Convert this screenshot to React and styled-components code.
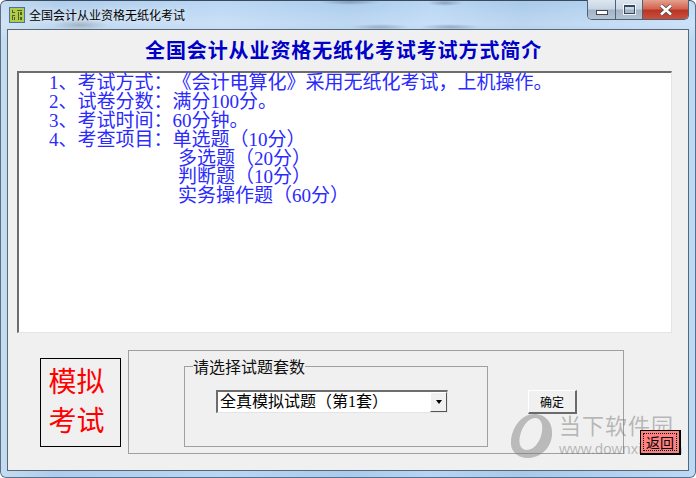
import React from "react";
import styled, { createGlobalStyle } from "styled-components";

const CJK = `"Noto Sans CJK SC", "Liberation Sans", sans-serif`;
const BODY = `"Liberation Serif", "Noto Sans CJK SC", serif`;

const Global = createGlobalStyle`
  html, body {
    margin: 0;
    padding: 0;
    background: #fff;
    overflow: hidden;
    text-spacing-trim: space-all;
  }
`;

const Window = styled.div`
  position: relative;
  width: 696px;
  height: 478px;
  box-sizing: border-box;
  padding: 0 7px 7px;
  display: flex;
  flex-direction: column;
  border-radius: 6px;
  box-shadow: inset 0 1px 0 #3a4a5c, inset 1px 0 0 #5b7088, inset -1px 0 0 #5b7088, inset 0 -1px 0 #5b7088;
  background:
    radial-gradient(ellipse 28px 5px at 80px 25px, rgba(120, 130, 130, 0.45), transparent),
    radial-gradient(ellipse 30px 3px at 350px 2px, rgba(90, 110, 135, 0.5), transparent),
    radial-gradient(ellipse 18px 3px at 445px 3px, rgba(90, 110, 135, 0.5), transparent),
    radial-gradient(ellipse 30px 3px at 380px 27px, rgba(90, 110, 135, 0.4), transparent),
    radial-gradient(ellipse 30px 3px at 450px 27px, rgba(90, 110, 135, 0.45), transparent),
    linear-gradient(180deg, transparent 0, rgba(255, 255, 255, 0.25) 24px, transparent 40px),
    linear-gradient(90deg, #c5dcf0 0, #aecdec 8%, #b9d6f4 32%, #a9cbed 50%, #b6d5f4 62%, #a8c9ea 75%, #bcd9f6 100%);
`;

const TitleBar = styled.div`
  height: 29px;
  display: flex;
  align-items: flex-start;
  flex: 0 0 auto;
`;

const AppIcon = styled.svg`
  width: 16px;
  height: 16px;
  margin: 7px 4px 0 2px;
  flex: 0 0 auto;
`;

const Title = styled.div`
  font: 12px/18px ${CJK};
  color: #000;
  margin-top: 6px;
  white-space: nowrap;
  text-shadow: 0 0 6px rgba(255, 255, 255, 0.9);
`;

const Controls = styled.div`
  margin-left: auto;
  display: flex;
  height: 20px;
  box-sizing: border-box;
  border: 1px solid #4f6175;
  border-top: none;
  border-radius: 0 0 5px 5px;
  overflow: hidden;
`;

const CaptionButton = styled.div`
  width: ${(p) => p.$width}px;
  display: flex;
  align-items: center;
  justify-content: center;
  box-sizing: border-box;
  border-left: ${(p) => (p.$first ? "none" : "1px solid #4f6175")};
  background: ${(p) =>
    p.$close
      ? "linear-gradient(180deg, #e4a190 0, #d4654f 45%, #bb3526 55%, #c8503c 100%)"
      : "linear-gradient(180deg, #dce6f0 0, #c8d6e4 45%, #a3b4c6 55%, #b4c3d3 100%)"};
`;

const MinGlyph = styled.div`
  width: 10px;
  height: 3px;
  margin-top: 6px;
  background: #fff;
  border: 1px solid #445;
`;

const MaxGlyph = styled.div`
  width: 9px;
  height: 6px;
  border: 1px solid #39475a;
  outline: 1px solid rgba(255, 255, 255, 0.8);
  border-top-width: 2px;
`;

const Client = styled.div`
  flex: 1 1 auto;
  min-height: 0;
  box-sizing: border-box;
  background: #f0f0f0;
  border: 1px solid #5a6776;
  display: flex;
  flex-direction: column;
`;

const Heading = styled.div`
  height: 41px;
  flex: 0 0 auto;
  box-sizing: border-box;
  padding: 6px 0 0 137px;
  font: bold 20px/28px ${CJK};
  letter-spacing: 0.9px;
  color: #0000c8;
  white-space: nowrap;
`;

const TextBox = styled.div`
  margin-left: 9px;
  width: 655px;
  height: 262px;
  flex: 0 0 auto;
  box-sizing: border-box;
  background: #fff;
  border-style: solid;
  border-width: 2px 1px 1px 2px;
  border-color: #6d6d6d #e4e4e4 #e4e4e4 #6d6d6d;
`;

const Line = styled.div`
  height: 18.9px;
  line-height: 19px;
  font-family: ${BODY};
  font-size: 19px;
  color: #2a2aff;
  white-space: pre;
  padding-left: ${(p) => p.$indent}px;
`;

const Bottom = styled.div`
  display: flex;
  align-items: flex-start;
  padding: 17px 0 0 32px;
`;

const ModeBox = styled.div`
  width: 81px;
  height: 89px;
  margin-top: 8px;
  box-sizing: border-box;
  border: 1px solid #000;
  color: #f00;
  font: 28px/39px ${CJK};
  text-align: center;
  padding: 2px 8px 0 0;
  flex: 0 0 auto;
`;

const OuterGroup = styled.div`
  margin-left: 7px;
  width: 496px;
  height: 104px;
  box-sizing: border-box;
  border: 1px solid #a0a0a0;
  display: flex;
  align-items: flex-start;
  padding: 6px 0 0 55px;
  flex: 0 0 auto;
`;

const Fieldset = styled.fieldset`
  width: 304px;
  height: 90px;
  box-sizing: border-box;
  margin: 0;
  padding: 15px 0 0;
  border: 1px solid #a0a0a0;
  flex: 0 0 auto;
`;

const Legend = styled.legend`
  font: 16px/18px ${CJK};
  color: #111;
  padding: 0;
  margin-left: 8px;
`;

const Combo = styled.div`
  width: 232px;
  height: 23px;
  margin-left: 31px;
  box-sizing: border-box;
  background: #fff;
  border-style: solid;
  border-width: 2px 1px 1px 2px;
  border-color: #6d6d6d #e4e4e4 #e4e4e4 #6d6d6d;
  display: flex;
  align-items: center;
  font: 16px/20px ${BODY};
  color: #000;
  padding-left: 2px;
`;

const ComboArrow = styled.div`
  margin-left: auto;
  width: 17px;
  height: 20px;
  box-sizing: border-box;
  background: #f0f0f0;
  border-style: solid;
  border-width: 1px;
  border-color: #fff #555 #555 #fff;
  display: flex;
  align-items: center;
  justify-content: center;
  &::after {
    content: "";
    border-style: solid;
    border-width: 4px 3.5px 0;
    border-color: #000 transparent transparent;
  }
`;

const RaisedButton = styled.div`
  margin: 33px 0 0 40px;
  width: 49px;
  height: 24px;
  box-sizing: border-box;
  border-style: solid;
  border-width: 1px 2px 2px 1px;
  border-color: #fff #6a6a6a #6a6a6a #fff;
  background: #f0f0f0;
  font: 12px/21px ${CJK};
  color: #000;
  text-align: center;
  flex: 0 0 auto;
  position: relative;
  z-index: 2;
`;

const BackButton = styled.div`
  margin: 80px 0 0 16px;
  width: 41px;
  height: 25px;
  box-sizing: border-box;
  border-style: solid;
  border-width: 1px 2px 2px 1px;
  border-color: #000;
  background: #ff8080;
  padding: 2px;
  position: relative;
  z-index: 2;
  flex: 0 0 auto;
`;

const BackFocus = styled.div`
  height: 100%;
  box-sizing: border-box;
  border: 1px dotted #000;
  font: 14px/17px ${CJK};
  color: #000;
  text-align: center;
`;

const Watermark = styled.div`
  position: absolute;
  left: 510px;
  top: 412px;
  display: flex;
  align-items: flex-start;
  pointer-events: none;
  color: rgba(110, 110, 110, 0.45);
  z-index: 1;
`;

const WatermarkLogo = styled.svg`
  width: 44px;
  height: 46px;
  flex: 0 0 auto;
  margin-top: 1px;
`;

const WatermarkText = styled.div`
  margin-left: 5px;
  display: flex;
  flex-direction: column;
`;

const WatermarkName = styled.div`
  font: 22px/24px ${CJK};
  letter-spacing: 1px;
  white-space: nowrap;
`;

const WatermarkUrl = styled.div`
  font: 15px/18px "Liberation Sans", sans-serif;
  margin-top: 4px;
  white-space: nowrap;
`;

const lines = [
  { indent: 30, text: "1、考试方式：《会计电算化》采用无纸化考试，上机操作。" },
  { indent: 30, text: "2、试卷分数：满分100分。" },
  { indent: 30, text: "3、考试时间：60分钟。" },
  { indent: 30, text: "4、考查项目：单选题（10分）" },
  { indent: 159, text: "多选题（20分）" },
  { indent: 159, text: "判断题（10分）" },
  { indent: 159, text: "实务操作题（60分）" },
];

export default function App() {
  return (
    <>
      <Global />
      <Window>
        <TitleBar>
          <AppIcon viewBox="0 0 16 16">
            <rect x="0.5" y="0.5" width="15" height="15" fill="#b3c84e" stroke="#4a7396" />
            <path d="M3 3h1v2h2v1H3zM3 8h3v1H4v4H3zM5 10h1v3H5zM8 3h5v1H8zM9 5h1v8H9zM11 5h2v3h-2zM11 10h2v3h-2z" fill="#46641f" />
          </AppIcon>
          <Title>全国会计从业资格无纸化考试</Title>
          <Controls>
            <CaptionButton $width={27} $first>
              <MinGlyph />
            </CaptionButton>
            <CaptionButton $width={27}>
              <MaxGlyph />
            </CaptionButton>
            <CaptionButton $width={46} $close>
              <svg width="14" height="12" viewBox="0 0 14 12">
                <path d="M2 1.5 L12 10.5 M12 1.5 L2 10.5" stroke="#4a4a4a" strokeWidth="4" />
                <path d="M2 1.5 L12 10.5 M12 1.5 L2 10.5" stroke="#fff" strokeWidth="2.6" />
              </svg>
            </CaptionButton>
          </Controls>
        </TitleBar>
        <Client>
          <Heading>全国会计从业资格无纸化考试考试方式简介</Heading>
          <TextBox>
            {lines.map((line) => (
              <Line key={line.text} $indent={line.indent}>
                {line.text}
              </Line>
            ))}
          </TextBox>
          <Bottom>
            <ModeBox>
              模拟
              <br />
              考试
            </ModeBox>
            <OuterGroup>
              <Fieldset>
                <Legend>请选择试题套数</Legend>
                <Combo>
                  全真模拟试题（第1套）
                  <ComboArrow />
                </Combo>
              </Fieldset>
              <RaisedButton>确定</RaisedButton>
            </OuterGroup>
            <BackButton>
              <BackFocus>返回</BackFocus>
            </BackButton>
          </Bottom>
        </Client>
        <Watermark>
          <WatermarkLogo viewBox="0 0 44 46">
            <path
              fillRule="evenodd"
              d="M24 1 C36 1 43 10 42 22 C41 36 29 46 16 45 C6 44 0 37 1 28 C2 14 12 1 24 1 Z M26 5 C19 4 12 13 10 23 C8 31 11 37 17 37 C24 37 31 28 32 18 C33 11 31 6 26 5 Z"
              fill="rgba(120,120,120,0.45)"
            />
          </WatermarkLogo>
          <WatermarkText>
            <WatermarkName>当下软件园</WatermarkName>
            <WatermarkUrl>www.downxia.com</WatermarkUrl>
          </WatermarkText>
        </Watermark>
      </Window>
    </>
  );
}
